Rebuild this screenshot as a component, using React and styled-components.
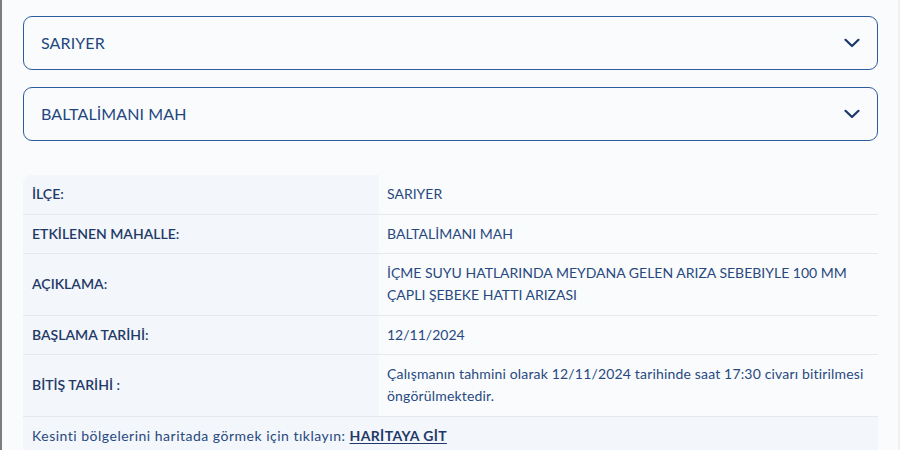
import React from "react";
import styled, { createGlobalStyle } from "styled-components";

const Global = createGlobalStyle`
  html, body { margin: 0; padding: 0; background: #f9fbfd; }
  body { font-family: Lato, "Noto Sans", sans-serif; }
  * { box-sizing: border-box; }
`;

const Page = styled.div`
  width: 900px;
  height: 450px;
  overflow: hidden;
  border-left: 2px solid #7d7d7d;
  border-right: 2px solid #eef0f3;
  background: #f9fbfd;
  padding: 16px 20px 0 21px;
  display: flex;
  flex-direction: column;
`;

const Selects = styled.div`
  display: flex;
  flex-direction: column;
  gap: 17px;
`;

const Select = styled.div`
  height: 54px;
  border: 1px solid #2f5ca0;
  border-radius: 9px;
  display: flex;
  align-items: center;
  justify-content: space-between;
  padding: 0 17px 1px 17px;
  color: #24467f;
  font-size: 16px;
  letter-spacing: 0.1px;
`;

const Chevron = () => (
  <svg width="16" height="10" viewBox="0 0 16 10" fill="none">
    <path d="M1.5 1.8 L8 8 L14.5 1.8" stroke="#1b3766" strokeWidth="2.2" strokeLinecap="round" strokeLinejoin="round" />
  </svg>
);

const Table = styled.div`
  margin-top: 34px;
  display: grid;
  grid-template-columns: 356px 1fr;
  border-radius: 8px 8px 0 0;
  overflow: hidden;
`;

const Label = styled.div`
  background: #f3f6fa;
  padding: 8px 9px 8.5px;
  line-height: 22px;
  font-size: 14px;
  font-weight: 600;
  color: #1f3a68;
  display: flex;
  align-items: center;
  border-bottom: 1px solid #e6e9ed;
`;

const Value = styled.div`
  padding: 8px 12px 8.5px 8px;
  line-height: 22px;
  font-size: 14px;
  letter-spacing: ${(p) => (p.$wide ? "0.17px" : "0")};
  color: #28497f;
  display: flex;
  align-items: center;
  border-bottom: 1px solid #e6e9ed;
`;

const Footer = styled.div`
  grid-column: 1 / span 2;
  background: #f3f6fa;
  padding: 8px 9px;
  line-height: 22px;
  font-size: 14px;
  letter-spacing: 0.5px;
  color: #28497f;
`;

const MapLink = styled.a`
  font-weight: 700;
  letter-spacing: 0.35px;
  color: #1f3a68;
  text-decoration: underline;
  text-underline-offset: 2px;
`;

const rows = [
  ["İLÇE:", "SARIYER"],
  ["ETKİLENEN MAHALLE:", "BALTALİMANI MAH"],
  ["AÇIKLAMA:", "İÇME SUYU HATLARINDA MEYDANA GELEN ARIZA SEBEBIYLE 100 MM ÇAPLI ŞEBEKE HATTI ARIZASI"],
  ["BAŞLAMA TARİHİ:", "12/11/2024"],
  ["BİTİŞ TARİHİ :", "Çalışmanın tahmini olarak 12/11/2024 tarihinde saat 17:30 civarı bitirilmesi öngörülmektedir.", true],
];

export default function App() {
  return (
    <>
      <Global />
      <Page>
        <Selects>
          <Select>
            <span>SARIYER</span>
            <Chevron />
          </Select>
          <Select>
            <span>BALTALİMANI MAH</span>
            <Chevron />
          </Select>
        </Selects>
        <Table>
          {rows.map(([l, v, wide]) => (
            <React.Fragment key={l}>
              <Label>{l}</Label>
              <Value $wide={wide}>{v}</Value>
            </React.Fragment>
          ))}
          <Footer>
            Kesinti bölgelerini haritada görmek için tıklayın: <MapLink href="#">HARİTAYA GİT</MapLink>
          </Footer>
        </Table>
      </Page>
    </>
  );
}
